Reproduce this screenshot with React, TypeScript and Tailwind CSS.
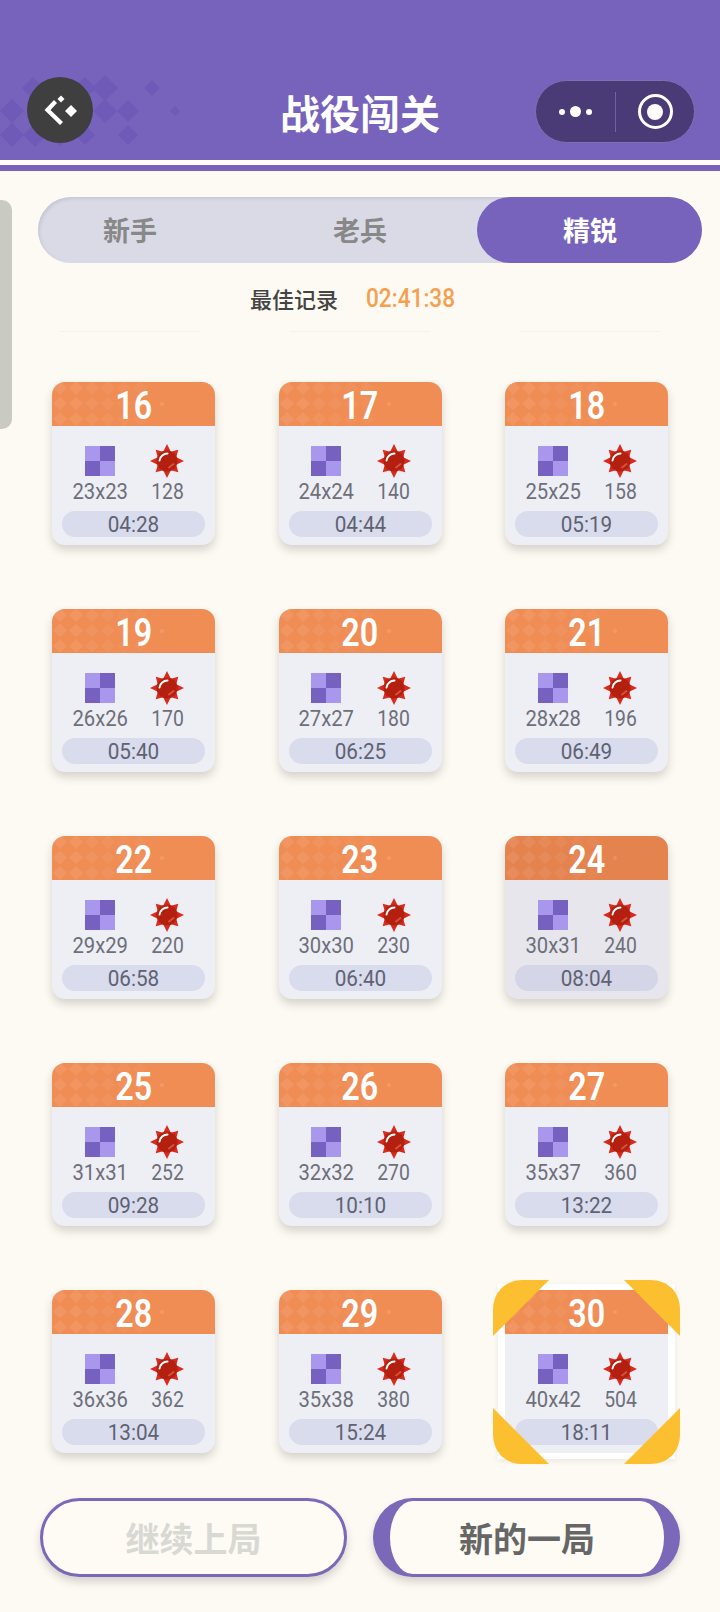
const levels = [
  { id: 16, size: '23x23', mines: 128, time: '04:28' },
  { id: 17, size: '24x24', mines: 140, time: '04:44' },
  { id: 18, size: '25x25', mines: 158, time: '05:19' },
  { id: 19, size: '26x26', mines: 170, time: '05:40' },
  { id: 20, size: '27x27', mines: 180, time: '06:25' },
  { id: 21, size: '28x28', mines: 196, time: '06:49' },
  { id: 22, size: '29x29', mines: 220, time: '06:58' },
  { id: 23, size: '30x30', mines: 230, time: '06:40' },
  { id: 24, size: '30x31', mines: 240, time: '08:04' },
  { id: 25, size: '31x31', mines: 252, time: '09:28' },
  { id: 26, size: '32x32', mines: 270, time: '10:10' },
  { id: 27, size: '35x37', mines: 360, time: '13:22' },
  { id: 28, size: '36x36', mines: 362, time: '13:04' },
  { id: 29, size: '35x38', mines: 380, time: '15:24' },
  { id: 30, size: '40x42', mines: 504, time: '18:11' },
]

const cjk = "font-['Noto_Sans_CJK_SC',sans-serif]"
const num = "font-['Roboto',sans-serif]"

const headerDiamonds = [
  [33, 88, 11], [85, 88, 11], [105, 88, 13], [152, 88, 8],
  [12, 111, 12], [58, 111, 11], [105, 111, 12], [128, 111, 11], [175, 111, 5],
  [12, 135, 12], [35, 135, 12], [60, 135, 11], [85, 135, 10], [128, 135, 10],
]

function HeaderPattern() {
  return (
    <svg className="absolute left-0 top-0" width="200" height="160">
      {headerDiamonds.map(([x, y, r]) => (
        <path key={`${x}-${y}`} d={`M${x} ${y - r}L${x + r} ${y}L${x} ${y + r}L${x - r} ${y}Z`} fill="#6f5bb7" />
      ))}
    </svg>
  )
}

function CardPattern() {
  const cells = []
  for (let row = 0; row < 3; row++) {
    for (let col = 0; col < 6; col++) {
      const x = 8 + col * 16
      const y = 6 + row * 15.5
      cells.push(
        <path
          key={`${row}-${col}`}
          d={`M${x} ${y - 7}L${x + 7} ${y}L${x} ${y + 7}L${x - 7} ${y}Z`}
          fill="#ffffff"
          opacity={0.08 - col * 0.01}
        />
      )
    }
  }
  return (
    <svg className="absolute left-0 top-0" width="163" height="44">
      {cells}
      <circle cx="110" cy="22" r="2" fill="#ffffff" opacity="0.12" />
    </svg>
  )
}

function GridIcon() {
  return (
    <svg width="30" height="30" viewBox="0 0 30 30">
      <rect width="15" height="15" fill="#a897ec" />
      <rect x="15" width="15" height="15" fill="#7660c0" />
      <rect y="15" width="15" height="15" fill="#7660c0" />
      <rect x="15" y="15" width="15" height="15" fill="#a897ec" />
    </svg>
  )
}

// 8 spikes, the straight ones longer than the diagonal ones
const minePoints = Array.from({ length: 16 }, (_, i) => {
  const angle = (i * Math.PI) / 8 - Math.PI / 2
  const r = i % 2 === 1 ? 10 : i % 4 === 0 ? 17 : 16
  return `${(17 + r * Math.cos(angle)).toFixed(2)},${(17 + r * Math.sin(angle)).toFixed(2)}`
}).join(' ')

function MineIcon() {
  return (
    <svg width="34" height="34" viewBox="0 0 34 34">
      <polygon points={minePoints} fill="#d92a1e" />
      <circle cx="17" cy="17" r="10.500" fill="#b3200f" />
      <path d="M9.500 16.500C10 12.500 13.500 9.500 17.500 9.500" fill="none" stroke="#ffffff" strokeWidth="2" strokeLinecap="round" />
      <path d="M19 23.500L23.500 20" stroke="#d6503c" strokeWidth="2" strokeLinecap="round" />
    </svg>
  )
}

function Corners() {
  return (
    <svg className="absolute left-[-12px] top-[-10px]" width="187" height="184" viewBox="0 0 187 184">
      <path d="M0 56V30C0 12 12 0 30 0H56Z" fill="#fbbf2f" />
      <path d="M187 56V30C187 12 175 0 157 0H131Z" fill="#fbbf2f" />
      <path d="M0 128V154C0 172 12 184 30 184H56Z" fill="#fbbf2f" />
      <path d="M187 128V154C187 172 175 184 157 184H131Z" fill="#fbbf2f" />
    </svg>
  )
}

function LevelCard({ level }: { level: (typeof levels)[number] }) {
  const pressed = level.id === 24
  const selected = level.id === 30
  return (
    <div className="relative h-[163px] w-[163px]">
      {selected && <div className="absolute -inset-x-[7px] -inset-y-[6px] bg-white shadow-[0_2px_6px_rgba(0,0,0,0.08)]" />}
      <div
        className={`relative h-full overflow-hidden ${pressed ? 'bg-[#e6e6ec]' : 'bg-[#eeeef5]'} ${
          selected ? '' : 'rounded-[13px] shadow-[0_5px_10px_rgba(0,0,0,0.16)]'
        }`}
      >
        <div className={`relative flex h-[44px] items-center justify-center pt-[4px] ${pressed ? 'bg-[#e5834f]' : 'bg-[#f08d55]'}`}>
          <CardPattern />
          <span className={`relative inline-block scale-x-[0.85] text-[38px] font-semibold leading-none text-white ${num}`}>{level.id}</span>
        </div>
        <div className="grid grid-cols-2 px-[14px] pt-[18px]">
          <div className="flex flex-col items-center">
            <div className="flex h-[34px] items-center"><GridIcon /></div>
            <span className={`mt-[1px] inline-block scale-x-[0.92] whitespace-nowrap text-[22px] leading-[26px] text-[#6d6f79] ${num}`}>{level.size}</span>
          </div>
          <div className="flex flex-col items-center">
            <MineIcon />
            <span className={`mt-[1px] inline-block scale-x-[0.88] text-[22px] leading-[26px] text-[#6d6f79] ${num}`}>{level.mines}</span>
          </div>
        </div>
        <div
          className={`mx-[10px] mt-[6px] flex h-[26px] items-center justify-center rounded-full text-[22px] text-[#5f6272] ${num} ${
            pressed ? 'bg-[#d4d5e6]' : 'bg-[#d9dcec]'
          }`}
        >
          <span className="inline-block scale-x-[0.94]">{level.time}</span>
        </div>
      </div>
      {selected && <Corners />}
    </div>
  )
}

export default function App() {
  return (
    <div className={`relative h-[1612px] w-[720px] overflow-hidden bg-[#fdfaf3] ${cjk}`}>
      {/* Nav bar */}
      <div className="relative flex h-[160px] items-end bg-[#7762bc] px-[27px] pb-[17px]">
        <HeaderPattern />
        <div className="relative flex h-[66px] w-[66px] items-center justify-center rounded-full bg-[#3f3f3f]">
          <svg width="36" height="36" viewBox="0 0 36 36" fill="#ffffff">
            <path d="M12 8L15 11L8.500 18L21 30L18 33L2.500 18Z" />
            <path d="M19 3.500L22.500 7L19 10.500L15.500 7Z" />
            <path d="M29 13L35 19L29 25L23 19Z" />
          </svg>
        </div>
        <span className="absolute bottom-[24px] left-0 right-0 text-center text-[40px] font-bold leading-[48px] text-white">战役闯关</span>
        <div className="relative ml-auto mr-[-2px] flex h-[63px] w-[160px] items-center rounded-full border border-[#7e70b5] bg-[#4a3b77]">
          <div className="flex w-[79px] items-center justify-center gap-[5px]">
            <span className="h-[6px] w-[6px] rounded-full bg-white" />
            <span className="h-[11px] w-[11px] rounded-full bg-white" />
            <span className="h-[6px] w-[6px] rounded-full bg-white" />
          </div>
          <div className="h-[40px] w-px bg-[#6f62a5]" />
          <div className="flex flex-1 items-center justify-center">
            <div className="flex h-[35px] w-[35px] items-center justify-center rounded-full border-[3px] border-white">
              <span className="h-[16px] w-[16px] rounded-full bg-white" />
            </div>
          </div>
        </div>
      </div>
      <div className="h-[5px] bg-white" />
      <div className="h-[6px] bg-[#7762bc]" />

      {/* Side handle */}
      <div className="absolute left-0 top-[200px] h-[229px] w-[12px] rounded-r-[10px] bg-[#c9cac2]" />

      {/* Tabs */}
      <div className="relative mx-[38px] mt-[26px] flex h-[66px] w-[664px] items-center rounded-full bg-[#d9dae5] text-[27px] font-bold text-[#888888] shadow-[inset_2px_2px_3px_#c8c9d8]">
        <div className="absolute bottom-0 right-0 top-0 w-[225px] rounded-full bg-[#7762bc]" />
        <span className="relative w-[184px] text-center">新手</span>
        <span className="relative ml-[22px] w-[232px] text-center">老兵</span>
        <span className="relative ml-[2px] w-[224px] text-center text-white">精锐</span>
      </div>

      {/* Best record */}
      <div className="mt-[17px] flex h-[36px] items-center pl-[250px]">
        <span className="text-[22px] font-medium text-[#444444]">最佳记录</span>
        <span className={`ml-[28px] inline-block origin-left scale-x-[0.87] text-[26px] font-medium text-[#f4a050] ${num}`}>02:41:38</span>
      </div>

      {/* Faint shadow strips under the scrolled row */}
      <div className="mt-[15px] grid h-px grid-cols-3 gap-x-[90px] px-[60px]">
        <div className="bg-[#f5f2ea]" />
        <div className="bg-[#f5f2ea]" />
        <div className="bg-[#f5f2ea]" />
      </div>

      {/* Level grid */}
      <div className="mt-[50px] grid grid-cols-[163px_163px_163px] gap-x-[63.5px] gap-y-[64px] pl-[52px]">
        {levels.map(level => (
          <LevelCard key={level.id} level={level} />
        ))}
      </div>

      {/* Actions */}
      <div className="mt-[45px] flex gap-[26px] pl-[40px]">
        <button className="h-[79px] w-[307px] rounded-full border-[3px] border-[#7b68b8] bg-[#fdfbf4] text-[34px] font-bold text-[#d9d9d4] shadow-[0_5px_8px_rgba(0,0,0,0.16)]">
          继续上局
        </button>
        <button className="h-[79px] w-[307px] rounded-full border-y-[3px] border-l-[17px] border-r-[16px] border-[#7b68b8] bg-[#fdfbf4] text-[34px] font-bold text-[#666666] shadow-[0_5px_8px_rgba(0,0,0,0.16)]">
          新的一局
        </button>
      </div>
    </div>
  )
}
